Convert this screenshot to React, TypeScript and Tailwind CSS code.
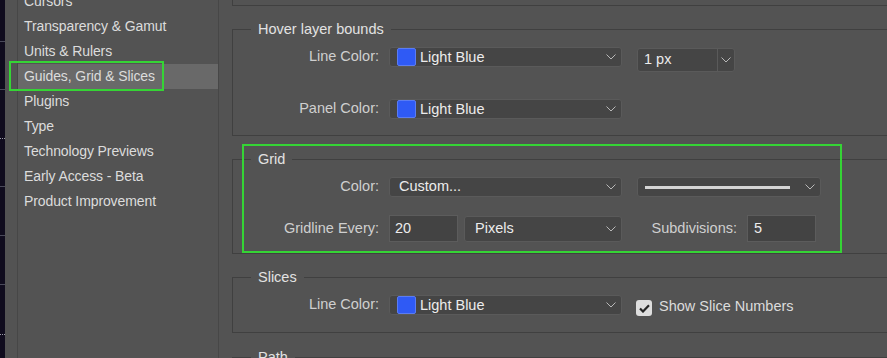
import React from "react";

const Chevron = () => (
  <svg width="10" height="6" viewBox="0 0 10 6" className="shrink-0">
    <polyline points="0.5,0.5 5,5 9.5,0.5" fill="none" stroke="#b8b8b8" strokeWidth="1" />
  </svg>
);

const Swatch = () => (
  <span className="ml-[7px] mr-[4px] h-[18px] w-[19px] shrink-0 rounded-[2px] border border-[#5b7cf2] bg-[#2f5af5]" />
);

const ColorSelect = ({ w = "w-[233px]" }: { w?: string }) => (
  <div className={`${w} flex h-[20px] items-center rounded-[3px] border border-[#5a5a5a] bg-[#454545] pr-[5px]`}>
    <Swatch />
    <span className="flex-1 text-[14.5px] leading-[18px] text-[#ececec]">Light Blue</span>
    <Chevron />
  </div>
);

const Label = ({ children, h = "h-[20px]" }: { children: React.ReactNode; h?: string }) => (
  <div className={`mr-[10px] flex ${h} w-[146px] shrink-0 items-center justify-end text-[14.5px] text-[#cfcfcf]`}>
    {children}
  </div>
);

const Legend = ({ children }: { children: React.ReactNode }) => (
  <legend className="ml-[18px] px-[7px] text-[14.5px] leading-[18px] text-[#e2e2e2]">{children}</legend>
);

const sidebar = [
  "Cursors",
  "Transparency & Gamut",
  "Units & Rulers",
  "Guides, Grid & Slices",
  "Plugins",
  "Type",
  "Technology Previews",
  "Early Access - Beta",
  "Product Improvement",
];

export default function App() {
  const stripHeights = [42, 48, 49, 48, 49, 49, 50, 40];
  return (
    <div
      className="relative flex h-[358px] w-[887px] overflow-hidden bg-[#535353]"
      style={{ fontFamily: '"Liberation Sans", Arial, sans-serif' }}
    >
      {/* dark strip at the far left */}
      <div className="flex w-[5px] shrink-0 flex-col bg-[#100c1e]">
        {stripHeights.map((h, i) => (
          <div
            key={i}
            className={`shrink-0 border-b ${i === 2 || i === 6 ? "border-dotted border-[#9a9aa6]" : "border-[#4a4a5a]"}`}
            style={{ height: h }}
          />
        ))}
      </div>
      <div className="w-[12px] shrink-0" />

      {/* sidebar */}
      <div className="flex w-[202px] shrink-0 flex-col border-x border-[#474747]">
        <div className="mt-[-11px] flex flex-col">
          {sidebar.map((s) => (
            <div
              key={s}
              className={`flex h-[25px] items-center pl-[6px] text-[14px] tracking-[-0.1px] text-[#dcdcdc] ${
                s === "Guides, Grid & Slices" ? "bg-[#696969]" : ""
              }`}
            >
              {s}
            </div>
          ))}
        </div>
      </div>

      {/* content */}
      <div className="flex min-w-0 flex-1 flex-col pl-[13px]">
        <div className="mr-[-20px] h-[6px] shrink-0 border-b border-l border-[#404040]" />

        {/* Hover layer bounds */}
        <fieldset className="mr-[-20px] mt-[14px] shrink-0 border border-[#404040] pb-[16px]">
          <Legend>Hover layer bounds</Legend>
          <div className="mt-[9px] flex items-start">
            <Label>Line Color:</Label>
            <ColorSelect />
            <div className="ml-[15px] mt-[1px] flex h-[24px] w-[98px] rounded-[3px] border border-[#5a5a5a] bg-[#454545]">
              <span className="flex flex-1 items-center pl-[6px] text-[14.5px] text-[#ececec]">1 px</span>
              <div className="flex w-[17px] items-center justify-center border-l border-[#5a5a5a]">
                <Chevron />
              </div>
            </div>
          </div>
          <div className="mt-[27px] flex items-start">
            <Label>Panel Color:</Label>
            <ColorSelect />
          </div>
        </fieldset>

        {/* Grid */}
        <fieldset className="mr-[-20px] mt-[14px] shrink-0 border border-[#404040] pb-[11px]">
          <Legend>Grid</Legend>
          <div className="mt-[9px] flex items-start">
            <Label>Color:</Label>
            <div className="flex h-[20px] w-[233px] items-center rounded-[3px] border border-[#5a5a5a] bg-[#454545] pl-[9px] pr-[5px]">
              <span className="flex-1 text-[14.5px] text-[#ececec]">Custom...</span>
              <Chevron />
            </div>
            <div className="ml-[15px] flex h-[20px] w-[184px] items-center rounded-[3px] border border-[#5a5a5a] bg-[#454545] pl-[7px] pr-[5px]">
              <span className="mr-[15px] h-[3px] flex-1 bg-[#d4d4d4]" />
              <Chevron />
            </div>
          </div>
          <div className="mt-[18px] flex items-start">
            <Label h="h-[27px]">Gridline Every:</Label>
            <div className="flex h-[27px] w-[69px] items-center border border-[#5c5c5c] bg-[#434343] pl-[5px] text-[14.5px] text-[#ececec]">
              20
            </div>
            <div className="ml-[6px] mt-[1px] flex h-[26px] w-[158px] items-center rounded-[3px] border border-[#5a5a5a] bg-[#454545] pl-[10px] pr-[5px]">
              <span className="flex-1 text-[14.5px] text-[#ececec]">Pixels</span>
              <Chevron />
            </div>
            <div className="ml-[30px] mr-[10px] flex h-[27px] w-[85px] items-center justify-end whitespace-nowrap text-[14.5px] text-[#cfcfcf]">
              Subdivisions:
            </div>
            <div className="flex h-[27px] w-[69px] items-center border border-[#5c5c5c] bg-[#434343] pl-[6px] text-[14.5px] text-[#ececec]">
              5
            </div>
          </div>
        </fieldset>

        {/* Slices */}
        <fieldset className="mr-[-20px] mt-[14px] shrink-0 border border-[#404040] pb-[17px]">
          <Legend>Slices</Legend>
          <div className="mt-[9px] flex h-[20px] items-start">
            <Label>Line Color:</Label>
            <ColorSelect />
            <div className="ml-[14px] mt-[5px] flex h-[16px] w-[16px] items-center justify-center rounded-[3px] bg-[#dedede]">
              <svg width="11" height="9" viewBox="0 0 11 9">
                <polyline points="1,4.5 4,7.5 10,1.2" fill="none" stroke="#262626" strokeWidth="2.2" />
              </svg>
            </div>
            <span className="ml-[7px] mt-[4px] flex h-[16px] items-center text-[14.5px] text-[#dcdcdc]">
              Show Slice Numbers
            </span>
          </div>
        </fieldset>

        {/* Path */}
        <fieldset className="mr-[-20px] mt-[15px] h-[60px] shrink-0 border border-[#404040]">
          <Legend>Path</Legend>
        </fieldset>
      </div>

      {/* green annotation boxes */}
      <div className="absolute left-[9px] top-[61px] h-[30px] w-[155px] border-2 border-[#35d435]" />
      <div className="absolute left-[242px] top-[144px] h-[109px] w-[600px] border-2 border-[#35d435]" />
    </div>
  );
}
